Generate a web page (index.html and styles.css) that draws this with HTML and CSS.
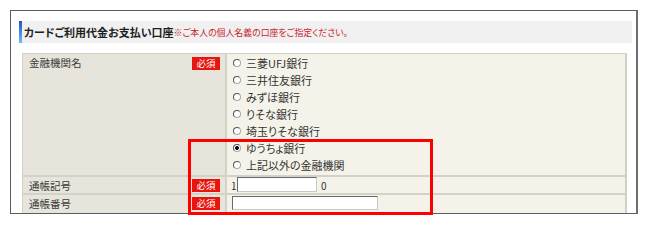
FILE: index.html
```html
<!DOCTYPE html>
<html lang="ja">
<head>
<meta charset="utf-8">
<link rel="stylesheet" href="styles.css">
</head>
<body>
<div class="frame">
  <div class="title">
    <span class="title-main">カードご利用代金お支払い口座</span><span class="title-note">※ご本人の個人名義の口座をご指定ください。</span>
  </div>
  <div class="form">
    <div class="row row-bank">
      <div class="label"><span class="label-text">金融機関名</span><span class="req">必須</span></div>
      <div class="value options">
        <label class="opt"><input type="radio" name="bank"><span>三菱UFJ銀行</span></label>
        <label class="opt"><input type="radio" name="bank"><span>三井住友銀行</span></label>
        <label class="opt"><input type="radio" name="bank"><span>みずほ銀行</span></label>
        <label class="opt"><input type="radio" name="bank"><span>りそな銀行</span></label>
        <label class="opt"><input type="radio" name="bank"><span>埼玉りそな銀行</span></label>
        <label class="opt"><input type="radio" name="bank" checked><span>ゆうちょ銀行</span></label>
        <label class="opt"><input type="radio" name="bank"><span>上記以外の金融機関</span></label>
      </div>
    </div>
    <div class="row row-mark">
      <div class="label"><span class="label-text">通帳記号</span><span class="req">必須</span></div>
      <div class="value inline"><span class="affix">1</span><input type="text" class="txt txt-mark"><span class="affix affix-after">0</span></div>
    </div>
    <div class="row row-num">
      <div class="label"><span class="label-text">通帳番号</span><span class="req">必須</span></div>
      <div class="value inline num"><input type="text" class="txt txt-num"></div>
    </div>
  </div>
</div>
<div class="highlight"></div>
</body>
</html>
```

FILE: styles.css
```css
* { box-sizing: border-box; }
html, body { margin: 0; padding: 0; background: #fff; }
body {
  position: relative;
  width: 649px;
  height: 227px;
  font-family: "Noto Sans CJK JP", "Noto Sans", sans-serif;
  font-feature-settings: "palt";
  color: #333;
}
.frame {
  margin: 10px 0 0 10px;
  width: 628px;
  height: 204px;
  border: 1px solid #5c5c5c;
  border-right: 2px solid #6e6e6e;
  padding: 10px 0 0 8px;
  overflow: hidden;
}
.title {
  width: 613px;
  height: 22px;
  background: #f0f0f0;
  border-style: solid;
  border-width: 0 0 0 3px;
  border-image: linear-gradient(#1d4cc4, #70c4f4) 1;
  display: flex;
  align-items: center;
  padding-left: 2px;
  white-space: nowrap;
}
.title-main {
  font-size: 11px;
  font-weight: bold;
  color: #1e1e1e;
}
.title-note {
  font-size: 8.9px;
  color: #c8242c;
}
.form {
  margin: 10px 0 0 3px;
  width: 605px;
  border-top: 1px solid #d2d0c6;
  border-left: 1px solid #d2d0c6;
  border-right: 2px solid #d2d0c6;
}
.row {
  display: flex;
}
.row + .row {
  border-top: 2px solid #d4d2c8;
}
.label {
  width: 204px;
  background: #e7e5db;
  border-right: 2px solid #d4d2c8;
  display: flex;
  align-items: flex-start;
  justify-content: space-between;
  padding: 0 5px 0 6px;
}
.label-text {
  font-size: 10.5px;
  line-height: 17px;
  color: #3a3a3a;
}
.req {
  margin-top: 3px;
  width: 28px;
  height: 13px;
  background: #e8140e;
  color: #fff;
  font-size: 9.5px;
  line-height: 13px;
  text-align: center;
}
.row-mark .req { margin-top: 2px; }
.row-num .req { margin-top: 2px; }
.value {
  flex: 1;
  background: #f5f3e9;
}
.row-bank { height: 121px; }
.row-mark { height: 18px; }
.row-num { height: 20px; }
.options {
  display: flex;
  flex-direction: column;
  padding: 0 0 2px 6px;
}
.opt {
  display: flex;
  align-items: center;
  height: 17px;
  font-size: 11px;
  color: #333;
}
.opt input {
  appearance: none;
  -webkit-appearance: none;
  margin: 0 5px 0 0;
  width: 8px;
  height: 8px;
  border-radius: 50%;
  border: 1px solid #a8a8a8;
  border-top-color: #555;
  border-left-color: #555;
  background: #fff;
}
.opt input:checked {
  background: radial-gradient(circle, #111 0 1.8px, #fff 2.2px);
}
.inline {
  display: flex;
  align-items: flex-start;
  padding-left: 4px;
}
.inline.num { padding-left: 5px; padding-top: 1px; }
.affix {
  font-size: 10px;
  line-height: 17px;
  width: 6px;
}
.affix-after { margin-left: 4px; }
.txt {
  margin: 0;
  padding: 0;
  height: 15px;
  background: #fff;
  border: 1px solid #c8c8c8;
  border-top-color: #6a6a6a;
  border-left-color: #6a6a6a;
  outline: none;
}
.txt-mark { width: 80px; }
.txt-num { width: 146px; height: 14px; }
.highlight {
  position: absolute;
  left: 188px;
  top: 139px;
  width: 245px;
  height: 76px;
  border: 3px solid #ff0000;
}
```
